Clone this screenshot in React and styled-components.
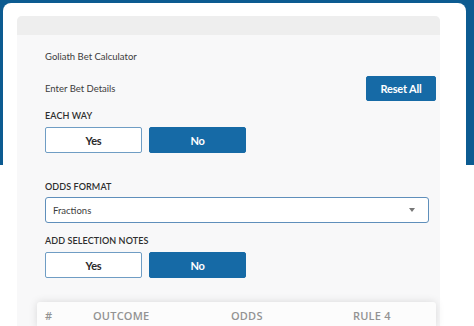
import React from "react";
import styled, { createGlobalStyle } from "styled-components";

const Global = createGlobalStyle`
  html, body { margin: 0; padding: 0; background: #fff; }
  body { font-family: Lato, "Open Sans", sans-serif; }
  * { box-sizing: border-box; }
`;

const Page = styled.div`
  width: 474px;
  height: 326px;
  overflow: hidden;
  background: linear-gradient(#0c5b91 0, #0c5b91 165px, #fff 165px);
  padding: 3px 8px 0 3px;
`;

const Card = styled.div`
  background: #fff;
  border-radius: 8px 8px 0 0;
  height: 100%;
  padding: 13px 26px 0 14px;
`;

const Panel = styled.div`
  background: #f8f8f9;
  border-radius: 5px 5px 0 0;
  height: 100%;
`;

const PanelHead = styled.div`
  height: 19px;
  background: #eeeeee;
  border-radius: 5px 5px 0 0;
`;

const PanelBody = styled.div`
  padding: 15px 4px 0 28px;
  display: flex;
  flex-direction: column;
`;

const Text = styled.div`
  font-family: Lato, sans-serif;
  font-size: 9.5px;
  line-height: 14px;
  color: #3c3c3c;
`;

const Label = styled.div`
  font-family: Lato, sans-serif;
  font-size: 9px;
  font-weight: 600;
  letter-spacing: 0.1px;
  line-height: 14px;
  color: #2e2e2e;
  text-transform: uppercase;
  margin-top: ${(p) => p.$mt}px;
`;

const Row = styled.div`
  display: flex;
  align-items: center;
  justify-content: space-between;
  margin-top: 12px;
`;

const Btn = styled.button`
  font-family: Lato, sans-serif;
  font-weight: 700;
  font-size: 11px;
  letter-spacing: -0.2px;
  height: ${(p) => p.$h || 26}px;
  width: ${(p) => p.$w}px;
  border-radius: 2px;
  padding: 0;
  cursor: pointer;
  border: 1px solid ${(p) => (p.$active ? "#166aa6" : "#6f9dc4")};
  background: ${(p) => (p.$active ? "#166aa6" : "#fff")};
  color: ${(p) => (p.$active ? "#fff" : "#2a2a2a")};
`;

const Toggle = styled.div`
  display: flex;
  gap: 7px;
  margin-top: 4px;
`;

const Select = styled.div`
  margin-top: 3px;
  margin-right: 7px;
  height: 26px;
  background: #fff;
  border: 1px solid #5f8fbb;
  border-radius: 3px;
  display: flex;
  align-items: center;
  justify-content: space-between;
  padding: 0 13px 0 7px;
  font-family: Lato, sans-serif;
  font-size: 9.5px;
  color: #3c3c3c;
`;

const Caret = styled.span`
  width: 0;
  height: 0;
  border-left: 3px solid transparent;
  border-right: 3px solid transparent;
  border-top: 4px solid #777;
`;

const TableHead = styled.div`
  margin: 24px 0 0 -8px;
  height: 26px;
  background: #fcfcfc;
  border-radius: 3px 3px 0 0;
  box-shadow: 0 0 9px rgba(0, 0, 0, 0.13);
  display: grid;
  grid-template-columns: 48px 138px 122px 1fr;
  align-items: center;
  padding-left: 8px;
`;

const Th = styled.div`
  font-family: "Open Sans", sans-serif;
  font-size: 11px;
  font-weight: 600;
  color: #939393;
  letter-spacing: 0.2px;
  text-transform: uppercase;
`;

function YesNo() {
  return (
    <Toggle>
      <Btn $w={97}>Yes</Btn>
      <Btn $w={97} $active>No</Btn>
    </Toggle>
  );
}

export default function App() {
  return (
    <>
      <Global />
      <Page>
        <Card>
          <Panel>
            <PanelHead />
            <PanelBody>
              <Text>Goliath Bet Calculator</Text>
              <Row>
                <Text>Enter Bet Details</Text>
                <Btn $w={70} $h={25} $active>Reset All</Btn>
              </Row>
              <Label $mt={8}>Each Way</Label>
              <YesNo />
              <Label $mt={27}>Odds Format</Label>
              <Select>
                <span>Fractions</span>
                <Caret />
              </Select>
              <Label $mt={11}>Add Selection Notes</Label>
              <YesNo />
              <TableHead>
                <Th>#</Th>
                <Th>Outcome</Th>
                <Th>Odds</Th>
                <Th>Rule 4</Th>
              </TableHead>
            </PanelBody>
          </Panel>
        </Card>
      </Page>
    </>
  );
}
